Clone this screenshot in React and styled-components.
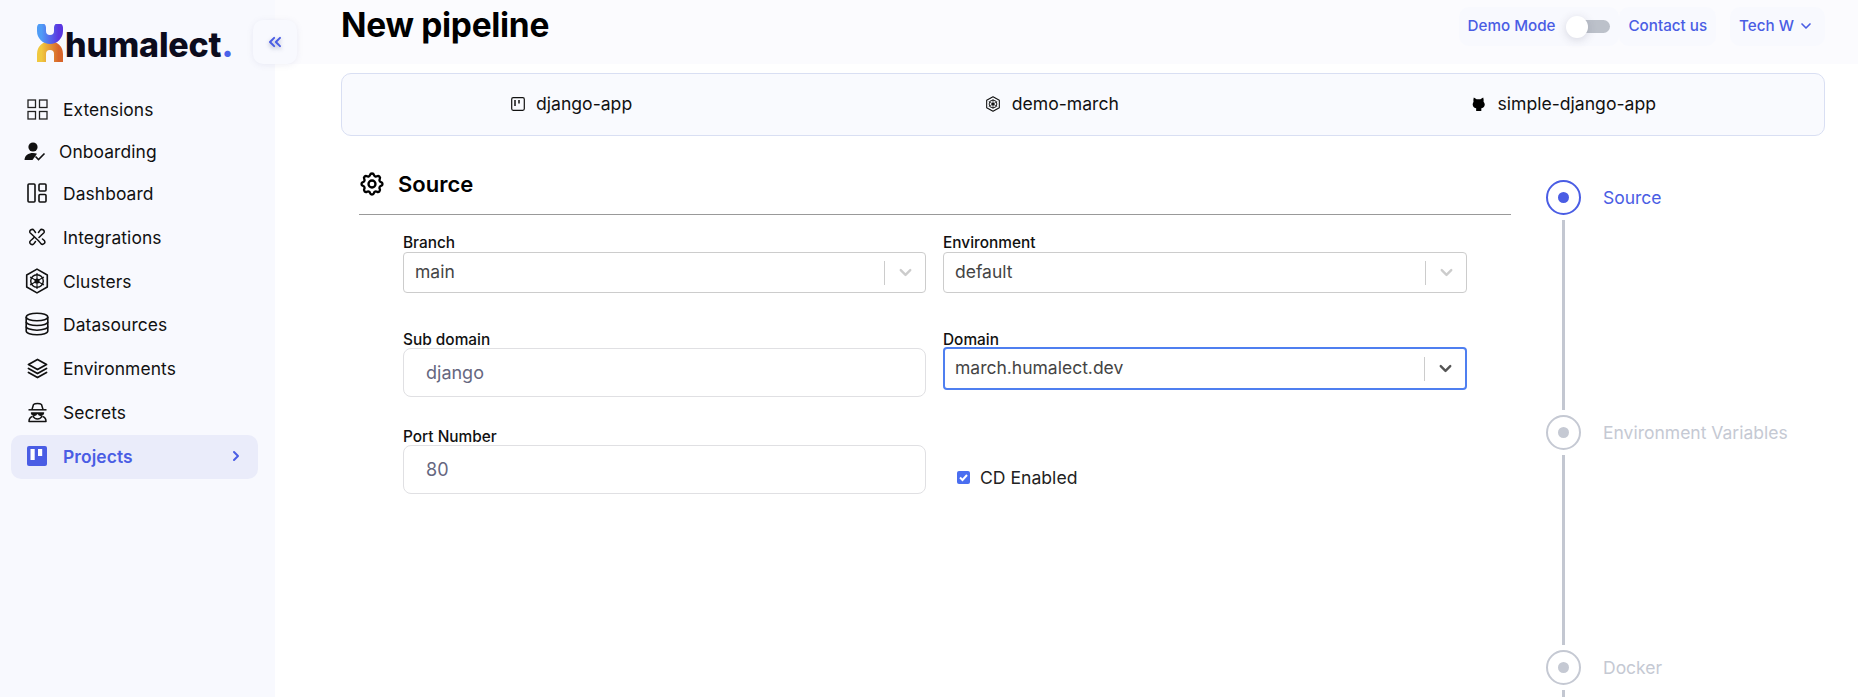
import React from 'react'
import styled, { createGlobalStyle } from 'styled-components'
import { LuChevronsLeft, LuChevronRight, LuChevronDown } from 'react-icons/lu'
import { TbSettings, TbChevronDown } from 'react-icons/tb'

const GlobalStyle = createGlobalStyle`
  * { box-sizing: border-box; }
  html, body { margin: 0; padding: 0; background: #fff; }
  body { font-family: Inter, "Liberation Sans", sans-serif; color: #000; }
`

const Shell = styled.div`
  display: flex;
  height: 697px;
  overflow: hidden;
  position: relative;
`

const Sidebar = styled.aside`
  flex: 0 0 275px;
  background: #f8f9fe;
  padding: 0 17px 0 11px;
`

const LogoRow = styled.div`
  display: flex;
  align-items: flex-end;
  height: 89px;
  padding: 0 0 27px 26px;
`

const LogoText = styled.span`
  font-size: 34px;
  font-weight: 800;
  line-height: 34px;
  letter-spacing: -0.2px;
  color: #0c0c1d;
  margin-left: 2px;
  span { color: #4a62ea; }
`

const NavItem = styled.div`
  display: flex;
  align-items: center;
  height: ${p => p.$h || 44}px;
  padding-left: ${p => p.$inset || 16}px;
  padding-bottom: ${p => p.$lift ?? 2}px;
  border-radius: 10px;
  font-size: 17.4px;
  font-weight: ${p => (p.$active ? 600 : 400)};
  color: ${p => (p.$active ? '#4a5de4' : '#111')};
  background: ${p => (p.$active ? '#eaecfa' : 'transparent')};
  letter-spacing: 0.1px;
`

const NavIcon = styled.span`
  display: flex;
  align-items: center;
  justify-content: center;
  width: 20px;
  height: 22px;
  margin-right: ${p => p.$gap || 16}px;
  flex: none;
  svg { display: block; flex: none; }
`

const NavArrow = styled.span`
  margin-left: auto;
  margin-right: 14px;
  display: flex;
  font-size: 16px;
`

const CollapseButton = styled.button`
  position: absolute;
  left: 253px;
  top: 20px;
  width: 44px;
  height: 44px;
  border: 0;
  border-radius: 10px;
  background: #f8f9fe;
  color: #4a5de4;
  display: flex;
  align-items: center;
  justify-content: center;
  font-size: 20px;
  padding: 0;
  box-shadow: 0 1px 6px rgba(120, 125, 170, 0.12);
  svg { filter: drop-shadow(0 2px 2px rgba(40, 50, 110, 0.35)); }
`

const Main = styled.main`
  flex: 1;
  min-width: 0;
`

const TopBar = styled.header`
  height: 64px;
  background: #fbfbfe;
  padding: 7px 33px 0 66px;
  display: flex;
  justify-content: space-between;
  align-items: flex-start;
`

const Title = styled.h1`
  margin: -1px 0 0;
  font-size: 33.5px;
  line-height: 39px;
  font-weight: 700;
  letter-spacing: -0.3px;
`

const TopActions = styled.div`
  display: flex;
`

const Chip = styled.div`
  display: flex;
  align-items: center;
  height: 39px;
  padding: 0 9px 2px;
  margin-left: ${p => p.$gap || 0}px;
  border-radius: 10px;
  background: #f8f9fe;
  color: #4a5de4;
  font-size: 15.2px;
  font-weight: 500;
`

const ChipCaret = styled.span`
  display: flex;
  margin-right: 2px;
`

const Toggle = styled.span`
  position: relative;
  display: block;
  width: 41px;
  height: 13px;
  margin: 2px 0 0 14px;
  border-radius: 7px;
  background: #bcc1ca;
  &::before {
    content: '';
    position: absolute;
    left: -3px;
    top: -4.5px;
    width: 22px;
    height: 22px;
    border-radius: 50%;
    background: #fff;
    box-shadow: 0 2px 10px rgba(60, 60, 90, 0.18);
  }
`

const Content = styled.div`
  padding: 9px 33px 0 66px;
`

const Breadcrumb = styled.div`
  height: 63px;
  display: flex;
  justify-content: space-between;
  align-items: center;
  padding: 0 168px 2px 169px;
  background: #f9fafe;
  border: 1px solid #d9dff3;
  border-radius: 10px;
`

const Crumb = styled.div`
  display: flex;
  align-items: center;
  gap: 11px;
  font-size: 17.6px;
  color: #111;
  svg { display: block; }
`

const Columns = styled.div`
  display: flex;
  align-items: flex-start;
`

const FormPane = styled.section`
  width: 1152px;
  margin-left: 18px;
`

const SectionHead = styled.div`
  height: 79px;
  display: flex;
  align-items: center;
  padding: 18px 0 0 0;
  border-bottom: 1px solid #999;
  font-size: 22px;
  font-weight: 600;
  gap: 12px;
  svg { display: block; margin-left: -1px; }
`

const FormGrid = styled.div`
  display: grid;
  grid-template-columns: 523px 524px;
  column-gap: 17px;
  grid-auto-rows: 97px;
  padding: 19px 0 0 44px;
`

const Field = styled.div`
  display: flex;
  flex-direction: column;
`

const Label = styled.label`
  display: block;
  font-size: 15.4px;
  font-weight: 500;
  line-height: 18px;
  color: #111;
`

const Select = styled.div`
  display: flex;
  align-items: center;
  height: ${p => (p.$focused ? 43 : 41)}px;
  margin-top: ${p => (p.$focused ? -2 : 0)}px;
  border: ${p => (p.$focused ? '2px solid #4f7ff0' : '1px solid #ccc')};
  border-radius: 4px;
  padding-left: ${p => (p.$focused ? 10 : 11)}px;
  font-size: 17.5px;
  color: #444;
`

const SelectValue = styled.span`
  flex: 1;
  margin-top: -2px;
`

const SelectDivider = styled.span`
  width: 1px;
  height: 24px;
  background: #ccc;
`

const SelectArrow = styled.span`
  width: 40px;
  display: flex;
  justify-content: center;
  color: ${p => (p.$focused ? '#555' : '#ccc')};
  svg { display: block; }
`

const TextInput = styled.div`
  height: 49px;
  margin-top: -1px;
  border: 1px solid #e0e0e3;
  border-radius: 8px;
  padding: 0 22px;
  display: flex;
  align-items: center;
  font-size: 18px;
  color: #65677f;
`

const CheckRow = styled.div`
  display: flex;
  align-items: center;
  gap: 10px;
  padding: 39px 0 0 14px;
  font-size: 17.6px;
  color: #222;
`

const CheckBox = styled.span`
  width: 13px;
  height: 13px;
  border-radius: 2px;
  background: #4a6ef0;
  display: flex;
  align-items: center;
  justify-content: center;
`

const Stepper = styled.ol`
  list-style: none;
  margin: 44px 0 0 35px;
  padding: 0;
`

const Step = styled.li`
  display: flex;
  align-items: center;
  gap: 22px;
  font-size: 17.5px;
  color: ${p => (p.$active ? '#4a5de4' : '#c5c9d3')};
`

const StepDot = styled.span`
  flex: none;
  width: 35px;
  height: 35px;
  border-radius: 50%;
  border: 2.5px solid currentColor;
  display: flex;
  align-items: center;
  justify-content: center;
  &::after {
    content: '';
    width: 11px;
    height: 11px;
    border-radius: 50%;
    background: currentColor;
  }
`

const StepLine = styled.div`
  width: 3px;
  height: 190px;
  margin: 5px 0 5px 16px;
  background: #c3c7d1;
`

const LogoMark = () => (
  <svg width="26" height="38" viewBox="0 0 26 38" fill="none">
    <defs>
      <linearGradient id="mk-top" x1="0" y1="0" x2="1" y2="0">
        <stop offset="0" stopColor="#4f9cf6" />
        <stop offset="1" stopColor="#5a37e0" />
      </linearGradient>
      <linearGradient id="mk-bottom" x1="0" y1="0" x2="1" y2="0">
        <stop offset="0" stopColor="#f0c83f" />
        <stop offset="1" stopColor="#d8652a" />
      </linearGradient>
    </defs>
    <path d="M4.5 38V30a8.5 8.5 0 0 1 17 0v8" stroke="url(#mk-bottom)" strokeWidth="9" />
    <path d="M4.5 3.500V7a8.500 8.500 0 0 0 17 0V3.500" stroke="url(#mk-top)" strokeWidth="9" strokeLinecap="round" />
  </svg>
)

const GridIcon = () => (
  <svg width="21" height="21" viewBox="0 0 21 21" fill="none" stroke="#222" strokeWidth="1.3">
    <rect x="1" y="1" width="7.5" height="7.5" />
    <rect x="12.5" y="1" width="7.5" height="7.5" />
    <rect x="1" y="12.5" width="7.5" height="7.5" />
    <rect x="12.5" y="12.5" width="7.5" height="7.5" />
  </svg>
)

const OnboardIcon = () => (
  <svg width="22" height="19" viewBox="0 0 22 19" fill="#111">
    <circle cx="9" cy="5" r="4.6" />
    <path d="M0.5 18c0-4.4 4-7 8.5-7 1.4 0 2.8.2 4 .7L8.5 18z" />
    <path d="M11.5 14.5l3 3 6-6" fill="none" stroke="#111" strokeWidth="1.6" />
  </svg>
)

const DashIcon = () => (
  <svg width="20" height="20" viewBox="0 0 20 20" fill="none" stroke="#111" strokeWidth="1.6">
    <rect x="1" y="1" width="7" height="18" rx="1" />
    <rect x="12" y="1" width="7" height="7" rx="1" />
    <rect x="12" y="11.5" width="7" height="7.5" rx="1" />
  </svg>
)

const LinksIcon = () => (
  <svg width="18" height="18" viewBox="0 0 18 18" fill="none" stroke="#111" strokeWidth="1.5" strokeLinecap="round">
    <path d="M7.5 4.5 6 2.4a2.3 2.3 0 0 0-4 2.2c.7 1.1 2.2 1.9 3 2.9l5.5 5.3 2 2.3a2.3 2.3 0 0 0 4-2.3L14.5 11" />
    <path d="M10.5 4.5 12 2.4a2.3 2.3 0 0 1 4 2.2c-.7 1.1-2.2 1.9-3 2.9l-2 2" />
    <path d="M7.5 13.5 6 15.6a2.3 2.3 0 0 1-4-2.2c.7-1.1 2.2-1.9 3-2.9l1-1" />
  </svg>
)

const ClusterIcon = ({ size = 26, weight = 1.5 }) => (
  <svg width={size} height={size} viewBox="0 0 24 24" fill="none" stroke="#111" strokeWidth={weight}>
    <path d="M12 1 21.5 6.5v11L12 23 2.5 17.5v-11z" strokeLinejoin="round" />
    <circle cx="12" cy="12" r="5.8" strokeWidth={weight * 0.9} />
    <circle cx="12" cy="12" r="1.6" fill="#111" />
    <path d="M12 4.6v14.8M5.6 8.3l12.8 7.4M18.4 8.3 5.6 15.7" strokeWidth="1" />
  </svg>
)

const DatabaseIcon = () => (
  <svg width="24" height="24" viewBox="0 0 24 24" fill="none" stroke="#111" strokeWidth="1.6">
    <ellipse cx="12" cy="5" rx="10.8" ry="3.8" />
    <path d="M1.2 5v14c0 2.1 4.8 3.8 10.8 3.8s10.800-1.700 10.800-3.800V5" />
    <path d="M1.200 9.700c0 2.100 4.800 3.800 10.800 3.800s10.800-1.700 10.800-3.800" />
    <path d="M1.200 14.400c0 2.100 4.800 3.800 10.800 3.800s10.800-1.700 10.800-3.800" />
  </svg>
)

const LayersIcon = () => (
  <svg width="21" height="21" viewBox="0 0 21 21" fill="none" stroke="#111" strokeWidth="1.8" strokeLinejoin="round" strokeLinecap="round">
    <path d="M10.500 1.500 19.500 6.500 10.500 11.500 1.500 6.500z" />
    <path d="M1.500 10.500l9 5 9-5" />
    <path d="M1.500 14.500l9 5 9-5" />
  </svg>
)

const SpyIcon = () => (
  <svg width="21" height="21" viewBox="0 0 21 21" fill="none" stroke="#111" strokeWidth="1.5" strokeLinejoin="round">
    <path d="M5 7.500 6.500 2.500C8 1.200 13 1.200 14.500 2.500L16 7.500" />
    <path d="M1.500 7.800h18" />
    <path d="M4.500 11a2.700 2.700 0 0 0 5.200.600h1.600a2.700 2.700 0 0 0 5.200-.6z" fill="#111" />
    <path d="M6 14c.8 1.800 2.500 3 4.500 3s3.700-1.200 4.500-3" />
    <path d="M5.500 14.500c-2 .5-3.500 1.800-3.500 5h17c0-3.200-1.500-4.500-3.500-5" />
  </svg>
)

const BoardSolidIcon = () => (
  <svg width="20" height="20" viewBox="0 0 20 20">
    <rect width="20" height="20" rx="2" fill="#4a5de4" />
    <rect x="3.500" y="3" width="4.200" height="11" fill="#fff" />
    <rect x="11" y="3" width="4.200" height="7" fill="#fff" />
  </svg>
)

const BoardOutlineIcon = () => (
  <svg width="14" height="14" viewBox="0 0 14 14" fill="none" stroke="#111" strokeWidth="1.200">
    <rect x="0.700" y="0.700" width="12.600" height="12.600" rx="1.500" />
    <path d="M4 3v6M8 3v3.500" strokeWidth="1.500" />
  </svg>
)

const GithubCatIcon = () => (
  <svg width="15" height="16" viewBox="0 0 16 16" fill="#000">
    <path d="M3 1 6 3h4l3-2c.5 2 .6 3 .4 4.500C14.500 7 15 8 14.500 9.500c-.6 2-2 2.800-3.500 3V15.500H5.500v-3C4 12.300 2.500 11.500 2 9.500 1.500 8 2 7 2.700 5.500 2.400 4 2.500 3 3 1z" />
  </svg>
)

const navItems = [
  { label: 'Extensions', icon: <GridIcon />, h: 42 },
  { label: 'Onboarding', icon: <OnboardIcon />, h: 42, inset: 14, gap: 14 },
  { label: 'Dashboard', icon: <DashIcon />, h: 42 },
  { label: 'Integrations', icon: <LinksIcon />, lift: 0 },
  { label: 'Clusters', icon: <ClusterIcon />, lift: 0 },
  { label: 'Datasources', icon: <DatabaseIcon /> },
  { label: 'Environments', icon: <LayersIcon /> },
  { label: 'Secrets', icon: <SpyIcon /> },
]

const App = () => (
  <Shell>
    <GlobalStyle />
    <Sidebar>
      <LogoRow>
        <LogoMark />
        <LogoText>humalect<span>.</span></LogoText>
      </LogoRow>
      {navItems.map(item => (
        <NavItem key={item.label} $h={item.h} $inset={item.inset} $lift={item.lift}>
          <NavIcon $gap={item.gap}>{item.icon}</NavIcon>
          {item.label}
        </NavItem>
      ))}
      <NavItem $active>
        <NavIcon><BoardSolidIcon /></NavIcon>
        Projects
        <NavArrow><LuChevronRight strokeWidth={3} /></NavArrow>
      </NavItem>
    </Sidebar>
    <CollapseButton><LuChevronsLeft strokeWidth={2.4} /></CollapseButton>
    <Main>
      <TopBar>
        <Title>New pipeline</Title>
        <TopActions>
          <Chip>Demo Mode<Toggle /></Chip>
          <Chip>Contact us</Chip>
          <Chip $gap={14}>Tech W&nbsp;<ChipCaret><LuChevronDown size={16} strokeWidth={2.5} /></ChipCaret></Chip>
        </TopActions>
      </TopBar>
      <Content>
        <Breadcrumb>
          <Crumb><BoardOutlineIcon />django-app</Crumb>
          <Crumb><ClusterIcon size={16} weight={1.6} />demo-march</Crumb>
          <Crumb><GithubCatIcon />simple-django-app</Crumb>
        </Breadcrumb>
        <Columns>
          <FormPane>
            <SectionHead><TbSettings size={28} />Source</SectionHead>
            <FormGrid>
              <Field>
                <Label>Branch</Label>
                <Select>
                  <SelectValue>main</SelectValue>
                  <SelectDivider />
                  <SelectArrow><TbChevronDown size={19} strokeWidth={3} /></SelectArrow>
                </Select>
              </Field>
              <Field>
                <Label>Environment</Label>
                <Select>
                  <SelectValue>default</SelectValue>
                  <SelectDivider />
                  <SelectArrow><TbChevronDown size={19} strokeWidth={3} /></SelectArrow>
                </Select>
              </Field>
              <Field>
                <Label>Sub domain</Label>
                <TextInput>django</TextInput>
              </Field>
              <Field>
                <Label>Domain</Label>
                <Select $focused>
                  <SelectValue>march.humalect.dev</SelectValue>
                  <SelectDivider />
                  <SelectArrow $focused><TbChevronDown size={19} strokeWidth={3} /></SelectArrow>
                </Select>
              </Field>
              <Field>
                <Label>Port Number</Label>
                <TextInput>80</TextInput>
              </Field>
              <Field>
                <CheckRow>
                  <CheckBox>
                    <svg width="11" height="11" viewBox="0 0 11 11" fill="none" stroke="#fff" strokeWidth="2">
                      <path d="M2 5.500 4.500 8 9 3" />
                    </svg>
                  </CheckBox>
                  CD Enabled
                </CheckRow>
              </Field>
            </FormGrid>
          </FormPane>
          <Stepper>
            <Step $active><StepDot />Source</Step>
            <StepLine />
            <Step><StepDot />Environment Variables</Step>
            <StepLine />
            <Step><StepDot />Docker</Step>
            <StepLine />
          </Stepper>
        </Columns>
      </Content>
    </Main>
  </Shell>
)

export default App
